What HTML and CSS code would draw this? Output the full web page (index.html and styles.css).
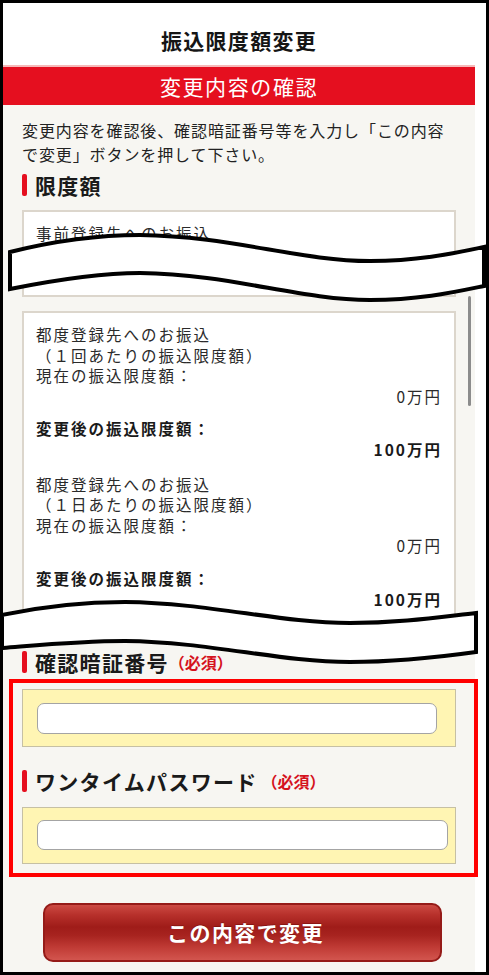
FILE: index.html
```html
<!DOCTYPE html>
<html lang="ja">
<head>
<meta charset="utf-8">
<title>振込限度額変更</title>
<link rel="stylesheet" href="styles.css">
</head>
<body>
<div class="frame">
  <div class="col">
    <header class="title">振込限度額変更</header>
    <div class="bar">変更内容の確認</div>
    <p class="lead">変更内容を確認後、確認暗証番号等を入力し「この内容<br>で変更」ボタンを押して下さい。</p>
    <h2 class="heading">限度額</h2>
    <div class="box box-short">
      <div class="group">
        <div class="line">事前登録先へのお振込</div>
        <div class="line">（１回あたりの振込限度額）</div>
      </div>
    </div>
    <div class="box">
      <div class="group">
        <div class="line">都度登録先へのお振込</div>
        <div class="line">（１回あたりの振込限度額）</div>
        <div class="line">現在の振込限度額：</div>
        <div class="line amount">0万円</div>
        <div class="after">
          <div class="line strong">変更後の振込限度額：</div>
          <div class="line strong amount">100万円</div>
        </div>
      </div>
      <div class="group">
        <div class="line">都度登録先へのお振込</div>
        <div class="line">（１日あたりの振込限度額）</div>
        <div class="line">現在の振込限度額：</div>
        <div class="line amount">0万円</div>
        <div class="after">
          <div class="line strong">変更後の振込限度額：</div>
          <div class="line strong amount">100万円</div>
        </div>
      </div>
    </div>
    <h2 class="heading heading-pin">確認暗証番号<span class="req">（必須）</span></h2>
    <div class="field field-1"><input class="input input-1" type="password" aria-label="確認暗証番号"></div>
    <h2 class="heading heading-otp">ワンタイムパスワード<span class="req req-gap">（必須）</span></h2>
    <div class="field field-2"><input class="input input-2" type="password" aria-label="ワンタイムパスワード"></div>
    <button class="submit" type="button">この内容で変更</button>
  </div>
  <svg class="overlay" width="489" height="975" viewBox="0 0 489 975" aria-hidden="true">
    <rect x="468" y="296" width="3" height="110" rx="1.5" fill="#8c8c8c"/>
    <path d="M10,252 C50,242 95,235 140,235 C230,236 300,261 370,261 C420,261 455,253 484,247 L484,286 C455,292 420,300 370,300 C300,300 230,274 140,273 C95,273 50,281 10,289 Z" fill="#fff" stroke="#000" stroke-width="4"/>
    <path d="M2,615 C40,607 80,602 125,602 C210,603 280,623 350,623 C400,623 440,617 476,613 L476,652 C440,657 400,662 350,662 C280,662 210,642 125,641 C80,641 40,645 2,648 Z" fill="#fff" stroke="#000" stroke-width="4"/>
    <rect x="11" y="681" width="465" height="194" fill="none" stroke="#ff0000" stroke-width="4"/>
  </svg>
</div>
</body>
</html>
```
FILE: styles.css
```css
html, body {
  margin: 0;
  padding: 0;
  background: #fff;
}

body {
  font-family: "Noto Sans CJK JP", "Noto Sans", sans-serif;
  color: #222;
}

.frame {
  position: relative;
  width: 489px;
  height: 975px;
  box-sizing: border-box;
  border: 3px solid #000;
  background: #fff;
  overflow: hidden;
}

.col {
  width: 472px;
  height: 100%;
  background: #f7f6f2;
  display: flex;
  flex-direction: column;
}

.title {
  background: #fff;
  height: 62px;
  box-sizing: border-box;
  padding-top: 24px;
  line-height: 26px;
  font-size: 21px;
  letter-spacing: 1.3px;
  font-weight: 700;
  text-align: center;
  color: #151515;
}

.bar {
  border-top: 2px solid #f6b9b9;
  height: 38px;
  line-height: 38px;
  background: #e50f1f;
  color: #fff;
  font-size: 21px;
  letter-spacing: 1.6px;
  text-align: center;
  font-weight: 400;
}

.lead {
  margin: 13px 0 0 19px;
  font-size: 16px;
  letter-spacing: 0.9px;
  line-height: 24px;
  white-space: nowrap;
}

.heading {
  margin: 6px 0 0 19px;
  display: flex;
  align-items: center;
  gap: 8px;
  font-size: 21px;
  letter-spacing: 1.3px;
  line-height: 26px;
  font-weight: 700;
  color: #1a1a1a;
}

.heading::before {
  content: "";
  width: 5px;
  height: 22px;
  border-radius: 2px;
  background: #e50f1f;
  flex: none;
}

.req {
  margin-left: -8px;
  font-size: 16px;
  letter-spacing: 0;
  color: #d5121d;
}

.req-gap {
  margin-left: -4px;
}

.box {
  margin: 14px 0 0 19px;
  width: 434px;
  box-sizing: border-box;
  border: 2px solid #dcd6cc;
  background: #fff;
  padding: 11px 12px 12px 12px;
  font-size: 15.5px;
  letter-spacing: 2px;
  color: #2a2a2a;
}

.box-short {
  margin-top: 12px;
  height: 87px;
  overflow: hidden;
}

.line {
  line-height: 20.5px;
  white-space: nowrap;
}

.group + .group {
  margin-top: 13.5px;
}

.after {
  margin-top: 12px;
}

.after .line {
  line-height: 21px;
}

.strong {
  font-weight: 700;
  color: #1a1a1a;
}

.amount {
  text-align: right;
}

.heading-pin {
  margin-top: 25px;
}

.heading-otp {
  margin-top: 21px;
}

.field {
  margin: 14px 0 0 19px;
  width: 434px;
  box-sizing: border-box;
  border: 1px solid #c6c0a4;
  background: #fff5b3;
  padding-left: 14px;
}

.field-1 {
  height: 58px;
  padding-top: 13px;
}

.field-2 {
  margin-top: 13px;
  height: 57px;
  padding-top: 12px;
}

.input {
  display: block;
  box-sizing: border-box;
  height: 31px;
  margin: 0;
  border: 1.5px solid #a4a4a4;
  border-radius: 7px;
  background: #fff;
  padding: 0 8px;
}

.input-1 {
  width: 400px;
}

.input-2 {
  width: 411px;
  height: 30px;
}

.submit {
  margin: 39px 0 0 40px;
  width: 399px;
  height: 59px;
  box-sizing: border-box;
  border: 2px solid #951b18;
  border-radius: 10px;
  background: linear-gradient(to bottom, #cc4a43 0%, #b7302b 18%, #9f1c19 40%, #a7231f 55%, #c13c36 78%, #d2554e 100%);
  color: #fff;
  font-family: "Noto Sans CJK JP", "Noto Sans", sans-serif;
  font-size: 21px;
  font-weight: 700;
  letter-spacing: 1.4px;
  padding: 0 0 0 6px;
  text-shadow: 0 -1px 0 rgba(90, 0, 0, 0.35);
}

.overlay {
  position: absolute;
  top: -3px;
  left: -3px;
  pointer-events: none;
}
```
